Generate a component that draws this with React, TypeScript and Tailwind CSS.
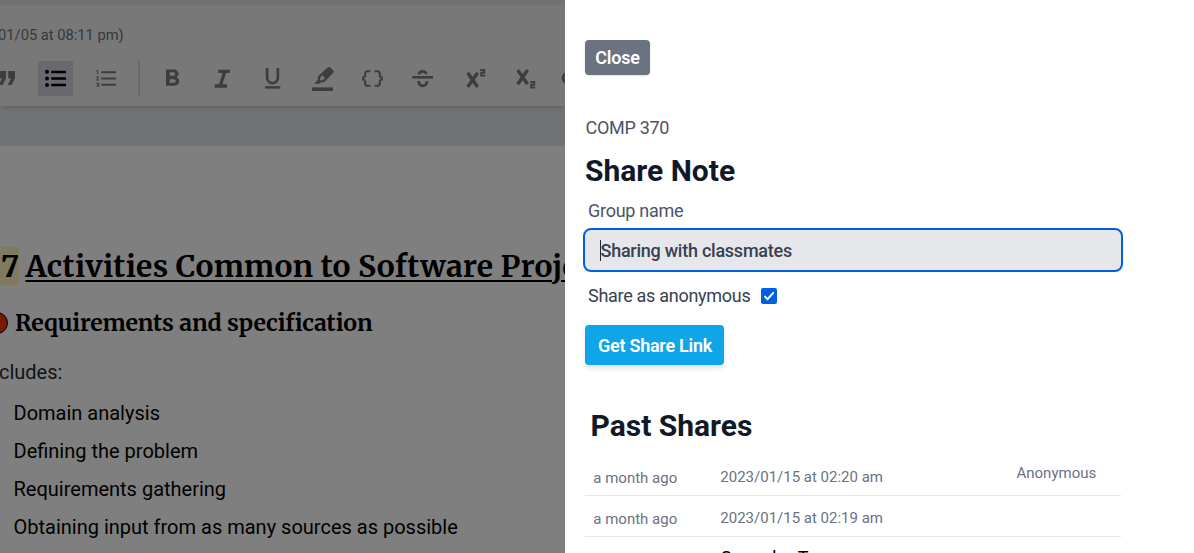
import { useState } from "react";
import type { ReactNode } from "react";
import { MdFormatListNumbered, MdDataObject } from "react-icons/md";

function Tool({ children, active }: { children: ReactNode; active?: boolean }) {
  return (
    <button
      className={
        active
          ? "flex size-[35px] shrink-0 items-center justify-center bg-[#d3d5df] text-black"
          : "flex size-[35px] shrink-0 items-center justify-center text-[#7a7a7a]"
      }
    >
      {children}
    </button>
  );
}

function Glyph({ children }: { children: ReactNode }) {
  return (
    <svg viewBox="0 0 35 35" className="size-[35px]" fill="none" stroke="currentColor">
      {children}
    </svg>
  );
}

const quote = (
  <path fill="currentColor" stroke="none" d="M20.3 10H27v7.2L23.7 24h-4l3.2-6.6h-2.6zM11.3 10H18v7.2L14.7 24h-4l3.2-6.6h-2.6z" />
);

const bulletList = (
  <>
    <g fill="currentColor" stroke="none">
      <circle cx="9" cy="10.8" r="2" />
      <circle cx="9" cy="17.5" r="2" />
      <circle cx="9" cy="24" r="2" />
    </g>
    <path strokeWidth="2.6" d="M13.2 11H28M13.2 17.5H28M13.2 24H28" />
  </>
);

const bold = (
  <path
    fill="currentColor"
    stroke="none"
    transform="translate(2.5 3.7) scale(1.22 1.17)"
    d="M15.6 10.79c.97-.67 1.65-1.77 1.65-2.79 0-2.26-1.75-4-4-4H7v14h7.04c2.09 0 3.71-1.7 3.71-3.79 0-1.52-.86-2.82-2.15-3.42zM10 6.5h3c.83 0 1.5.67 1.5 1.5s-.67 1.5-1.5 1.5h-3v-3zm3.5 9H10v-3h3.5c.83 0 1.5.67 1.5 1.5s-.67 1.5-1.5 1.5z"
  />
);

const italic = <path strokeWidth="3.3" d="M13.3 10.3H25M9.8 25H22M19.9 10.3 15.2 25" />;

const underline = (
  <>
    <path strokeWidth="2.7" d="M12.1 7v9.8a5.3 5.3 0 0 0 10.8 0V7" />
    <path strokeWidth="2.4" d="M10 26.4h15.3" />
  </>
);

const highlighter = (
  <>
    <path
      fill="currentColor"
      stroke="none"
      fillRule="evenodd"
      d="M22.6 6.6a2 2 0 0 1 2.8 0l2.7 2.7a2 2 0 0 1 0 2.8L19.4 21l-3.6.4-1.3 1.3H9l3.6-3.8.5-3.6zM17.5 14.2l-2.4 2.5v2.6h2.6l2.3-2.4z"
    />
    <path strokeWidth="3.6" d="M7 28.2h21" />
  </>
);

const strike = (
  <>
    <path strokeWidth="2.6" d="M7.3 16.3H28" />
    <path strokeWidth="2.8" d="M14.1 13.4c0-4 7.2-4.1 7.2-.2M13.7 20c0 6.6 8.3 6.4 8.3 0" />
  </>
);

const superscript = (
  <>
    <path strokeWidth="3.4" d="m12.7 11.7 9.9 14.3M22.6 11.7 12.7 26" />
    <path strokeWidth="1.9" d="M25.2 9h4v2.8h-3v2.8h4" />
  </>
);

const subscript = (
  <>
    <path strokeWidth="3.4" d="m12.7 9 9.9 14.3M22.6 9l-9.9 14.3" />
    <path strokeWidth="1.9" d="M25.2 21h4v2.8h-3v2.8h4" />
  </>
);

const link = <path strokeWidth="2.8" d="M16 12.7h-3.6a4.4 4.4 0 0 0 0 8.8H16M13 17h9M19 12.7h3.6a4.4 4.4 0 0 1 0 8.8H19" />;

const marks = [
  { name: "italic", art: italic },
  { name: "underline", art: underline },
  { name: "highlight", art: highlighter },
];

const bullets = [
  "Domain analysis",
  "Defining the problem",
  "Requirements gathering",
  "Obtaining input from as many sources as possible",
];

function Editor() {
  return (
    <div className="relative h-full w-[565px] shrink-0 overflow-hidden bg-[#e3e5e9] pt-[5px]">
      <header className="relative h-[101px] bg-[#f1f1f1] shadow-md">
        <p className="-ml-[8px] pt-[19px] text-[14.7px] leading-[22px] whitespace-nowrap text-[#6b7280]">
          /01/05 at 08:11 pm)
        </p>
        <div className="mt-[14px] -ml-3 flex h-[36px] items-center gap-[15px]">
          <Tool><Glyph>{quote}</Glyph></Tool>
          <Tool active><Glyph>{bulletList}</Glyph></Tool>
          <Tool><MdFormatListNumbered size={25} className="ml-px" /></Tool>
          <div className="h-[36px] w-[2px] shrink-0 bg-[#d3d5dc]" />
          <Tool><Glyph>{bold}</Glyph></Tool>
          {marks.map((m) => (
            <Tool key={m.name}><Glyph>{m.art}</Glyph></Tool>
          ))}
          <Tool><MdDataObject size={25} /></Tool>
          <Tool><Glyph>{strike}</Glyph></Tool>
          <Tool><Glyph>{superscript}</Glyph></Tool>
          <Tool><Glyph>{subscript}</Glyph></Tool>
          <Tool><Glyph>{link}</Glyph></Tool>
        </div>
      </header>
      <main className="mt-10 h-[407px] bg-white pt-[101px] whitespace-nowrap text-black">
        <h1 className="flex h-[38px] items-center gap-[7px] font-[Merriweather,serif] text-[30px] leading-[38px] font-bold">
          <span className="flex w-[19px] shrink-0 justify-end bg-[#fef5c0]">7</span>
          <span className="-ml-[0.5px] tracking-[0.28px] underline decoration-2 underline-offset-[3px]">
            Activities Common to Software Projects
          </span>
        </h1>
        <h2 className="mt-[22px] flex h-[32px] items-center gap-[7px] font-[Merriweather,serif] text-[23px] font-bold tracking-[-0.1px]">
          <span className="-ml-[14px] size-[22px] shrink-0 rounded-full border border-black bg-[#f2300f]" />
          Requirements and specification
        </h2>
        <p className="mt-[18px] -ml-[17.5px] text-[20px] leading-[30px] text-[#1f2937]">Includes:</p>
        <ul className="mt-[7px] ml-[13.5px] text-[20px] leading-[38px]">
          {bullets.map((b) => (
            <li key={b}>{b}</li>
          ))}
        </ul>
      </main>
      <div className="absolute inset-0 bg-black/50" />
    </div>
  );
}

function ShareRow({ date, anonymous }: { date: string; anonymous?: boolean }) {
  return (
    <div className="flex h-[41px] border-b border-[#e5e7eb] text-[15px] leading-[20px] text-[#6b7280]">
      <span className="w-[135px] pt-[13px] pl-[8.3px]">a month ago</span>
      <span className="w-[296.5px] pt-[12px] pl-[0.3px]">{date}</span>
      {anonymous && <span className="pt-[8px]">Anonymous</span>}
    </div>
  );
}

function SharePanel() {
  const [anonymous, setAnonymous] = useState(true);
  return (
    <aside className="h-full flex-1 overflow-hidden bg-white pt-10 pl-5">
      <button className="block h-[35px] w-[65px] rounded bg-[#6b7280] text-[18px] font-semibold tracking-[-0.2px] text-white shadow">
        Close
      </button>
      <p className="mt-[39px] ml-[0.5px] text-[18px] leading-[28px] tracking-[-0.3px] text-[#4b5563]">COMP 370</p>
      <h2 className="mt-[11px] text-[30px] leading-[36px] font-bold text-[#111827]">Share Note</h2>
      <p className="mt-[8px] ml-[3px] text-[18px] leading-[28px] tracking-[-0.27px] text-[#4b5563]">Group name</p>
      <div className="mt-[3px] -ml-[2px] flex h-[44px] w-[540px] items-center rounded-lg border-2 border-[#0060df] bg-[#e5e7eb] pl-[15px] text-[18px] font-medium tracking-[-0.25px] text-[#374151]">
        <span className="-mr-[0.5px] h-[21px] w-px bg-[#1f2937]" />
        Sharing with classmates
      </div>
      <label className="mt-[10px] ml-[3px] flex h-[28px] items-center gap-[10.5px] text-[18px] tracking-[-0.29px] text-[#374151]">
        <span className="-mt-[2px]">Share as anonymous</span>
        <input
          type="checkbox"
          className="sr-only"
          checked={anonymous}
          onChange={(e) => setAnonymous(e.target.checked)}
        />
        <span className="flex size-4 items-center justify-center rounded-[2px] bg-[#0060df]">
          {anonymous && (
            <svg viewBox="0 0 16 16" className="size-4" fill="none" stroke="white" strokeWidth="2" strokeLinecap="round" strokeLinejoin="round">
              <path d="M4 8.6 6.6 11.2 12.2 4.8" />
            </svg>
          )}
        </span>
      </label>
      <button className="mt-[15px] block h-[40px] w-[139px] rounded bg-[#0ea5e9] pt-px pl-px text-[18px] font-semibold tracking-[-0.25px] text-white shadow-md">
        Get Share Link
      </button>
      <h2 className="mt-[43px] ml-[5.5px] text-[30px] leading-[36px] font-bold text-[#111827]">Past Shares</h2>
      <div className="mt-[11px] w-[536px]">
        <ShareRow date="2023/01/15 at 02:20 am" anonymous />
        <ShareRow date="2023/01/15 at 02:19 am" />
        <p className="mt-[7px] ml-[136px] text-[18px] leading-[28px] tracking-[-0.25px] text-black">Someday Team</p>
      </div>
    </aside>
  );
}

export default function App() {
  return (
    <div className="flex h-[553px] w-[1194px] overflow-hidden font-[Roboto,sans-serif]">
      <Editor />
      <SharePanel />
    </div>
  );
}
